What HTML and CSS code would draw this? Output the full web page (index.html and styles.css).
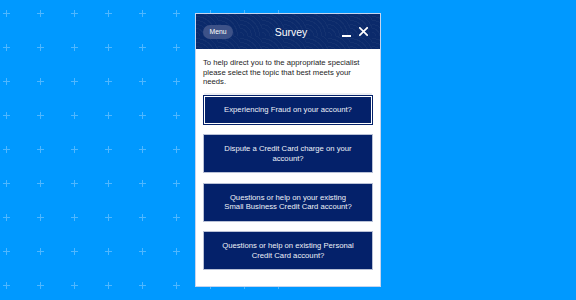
FILE: index.html
```html
<!DOCTYPE html>
<html lang="en">
<head>
  <meta charset="UTF-8" />
  <meta name="viewport" content="width=device-width, initial-scale=1.0"/>
  <title>Survey</title>
  <link rel="stylesheet" href="styles.css">
</head>
<body>
  <div class="stage">

    <!-- Backdrop crosses -->
    <svg class="backdrop" width="290" height="300" aria-hidden="true">
      <defs>
        <pattern id="crosses" width="34" height="34" x="-11" y="-4" patternUnits="userSpaceOnUse">
          <rect x="14" y="17" width="7" height="1" fill="#4fb7ff" />
          <rect x="17" y="14" width="1" height="7" fill="#4fb7ff" />
        </pattern>
      </defs>
      <rect width="290" height="300" fill="url(#crosses)" />
    </svg>

    <!-- Survey window -->
    <section class="panel">
      <header class="panel-head">
        <button class="menu-btn">Menu</button>
        <h1 class="panel-title">Survey</h1>
        <div class="head-icons">
          <span class="minimize"></span>
          <svg class="close" width="9" height="9" viewBox="0 0 9 9">
            <path d="M0.8 0.8 L8.2 8.2 M8.2 0.8 L0.8 8.2" stroke="#fff" stroke-width="1.7" stroke-linecap="square" />
          </svg>
        </div>
      </header>

      <div class="panel-body">
        <p class="intro">To help direct you to the appropriate specialist please select the topic that best meets your needs.</p>
        <div class="options">
          <button class="option focused">Experiencing Fraud on your account?</button>
          <button class="option">Dispute a Credit Card charge on your account?</button>
          <button class="option">Questions or help on your existing<br>Small Business Credit Card account?</button>
          <button class="option">Questions or help on existing Personal Credit Card account?</button>
        </div>
      </div>
    </section>

  </div>
</body>
</html>
```

FILE: styles.css
```css
body {
  margin: 0;
  background-color: #0099ff;
  font-family: 'Liberation Sans', Arial, sans-serif;
}

.stage {
  display: grid;
  width: 576px;
  height: 300px;
  overflow: hidden;
}

.backdrop, .panel {
  grid-area: 1 / 1;
}

.backdrop {
  display: block;
}

.panel {
  align-self: start;
  justify-self: start;
  margin: 13px 0 0 195px;
  width: 186px;
  height: 274px;
  box-sizing: border-box;
  border: 1px solid #c6d4ee;
  background: #fff;
  display: flex;
  flex-direction: column;
}

.panel-head {
  height: 35px;
  display: flex;
  align-items: center;
  padding: 0 12px 0 7px;
  background-color: #0b2a6b;
  background-image: repeating-radial-gradient(circle at 0 100%, transparent 0 3px, rgba(255, 255, 255, 0.035) 3px 4px);
  background-size: 22px 22px;
}

.menu-btn {
  height: 14px;
  width: 30px;
  padding: 0;
  border: none;
  border-radius: 7px;
  background: #3d5288;
  color: #fff;
  font-family: inherit;
  font-size: 6.8px;
  line-height: 14px;
}

.panel-title {
  flex: 1;
  margin: 0;
  text-align: center;
  color: #fff;
  font-size: 10.5px;
  font-weight: normal;
  padding-left: 7px;
}

.head-icons {
  display: flex;
  align-items: center;
  gap: 8px;
}

.minimize {
  width: 9px;
  height: 2px;
  background: #fff;
  margin-top: 8px;
}

.close {
  display: block;
}

.panel-body {
  padding: 9px 7px 0 7px;
}

.intro {
  margin: 0 0 8px 0;
  max-width: 160px;
  font-size: 7.7px;
  line-height: 9.7px;
  color: #1c1c1c;
}

.options {
  display: flex;
  flex-direction: column;
  gap: 9.5px;
}

.option {
  width: 170px;
  padding: 9px 10px;
  border: 1px solid #b9c1d6;
  background: #04216a;
  color: #eef1f8;
  font-family: inherit;
  font-size: 7.7px;
  line-height: 9.5px;
  text-align: center;
}

.option.focused {
  border-color: #04216a;
  box-shadow: inset 0 0 0 1px #fff, 0 -3px 0 -1px #eef0f4;
}
```
